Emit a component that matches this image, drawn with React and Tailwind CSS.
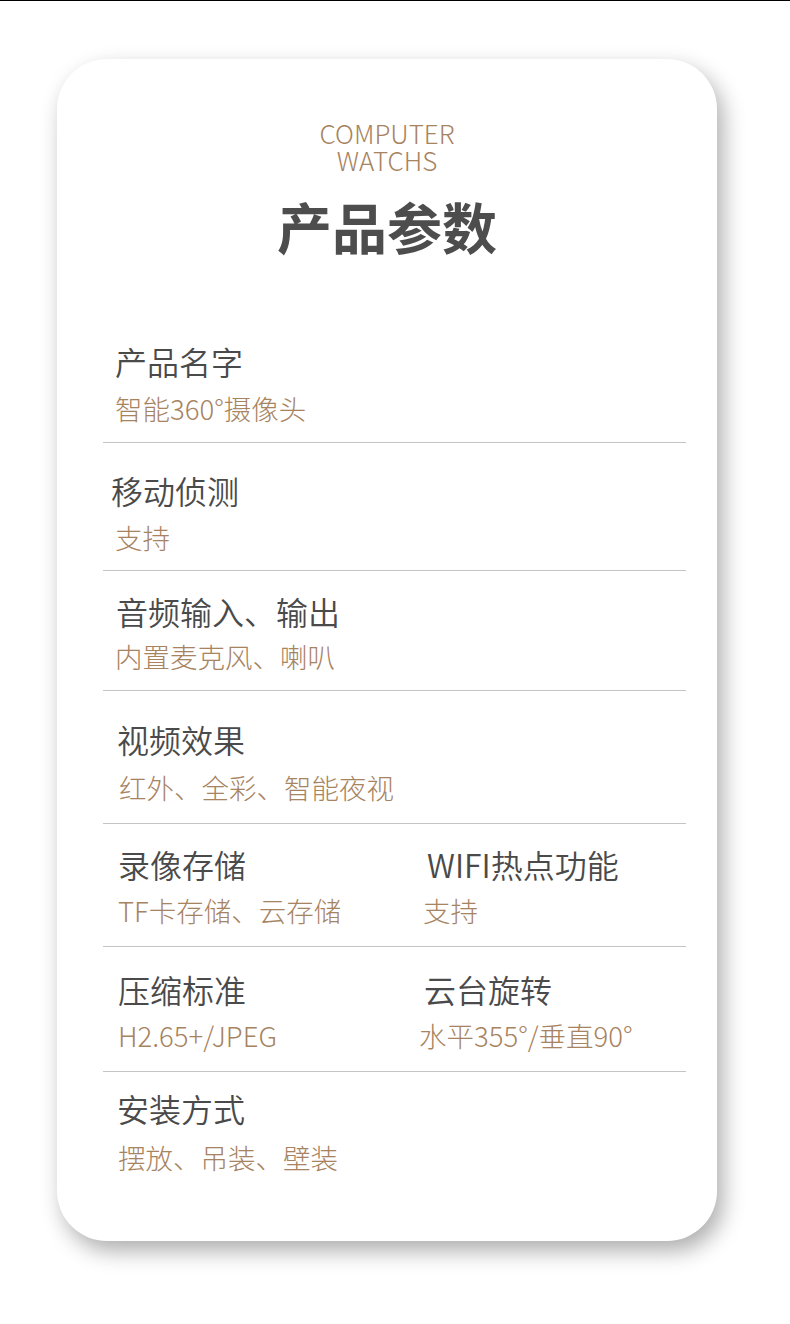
const specs = [
  { label: "产品名字", value: "智能360°摄像头", pt: "pt-[92px]", gap: "mt-[18px]", pb: "pb-[19px]", lp: "pl-[12px]", vp: "pl-[12px]" },
  { label: "移动侦测", value: "支持", pt: "pt-[31px]", gap: "mt-[18px]", pb: "pb-[19px]", lp: "pl-[8px]", vp: "pl-[12px]" },
  { label: "音频输入、输出", value: "内置麦克风、喇叭", pt: "pt-[24px]", gap: "mt-[16px]", pb: "pb-[19px]", lp: "pl-[13px]", vp: "pl-[12px]" },
  { label: "视频效果", value: "红外、全彩、智能夜视", pt: "pt-[32px]", gap: "mt-[19px]", pb: "pb-[22px]", lp: "pl-[14px]", vp: "pl-[16px]" },
  {
    label: "录像存储", value: "TF卡存储、云存储", label2: "WIFI热点功能", value2: "支持",
    pt: "pt-[24px]", gap: "mt-[17px]", pb: "pb-[21px]", lp: "pl-[15px]", vp: "pl-[15px]", lp2: "pl-[324px]", vp2: "pl-[320px]",
  },
  {
    label: "压缩标准", value: "H2.65+/JPEG", label2: "云台旋转", value2: "水平355°/垂直90°",
    pt: "pt-[26px]", gap: "mt-[17px]", pb: "pb-[22px]", lp: "pl-[15px]", vp: "pl-[15px]", lp2: "pl-[321px]", vp2: "pl-[316px]",
  },
  { label: "安装方式", value: "摆放、吊装、壁装", pt: "pt-[20px]", gap: "mt-[20px]", pb: "pb-0", lp: "pl-[14px]", vp: "pl-[15px]", last: true },
];

function Label({ text, pad }) {
  return <p className={`${pad} text-[32px] leading-none font-[350] text-[#4a4a4a] whitespace-nowrap`}>{text}</p>;
}

function Value({ text, pad }) {
  return <p className={`${pad} text-[27.5px] leading-none font-light text-[#a7835f] whitespace-nowrap`}>{text}</p>;
}

function SpecRow({ spec }) {
  const border = spec.last ? "" : "border-b border-[#c4c4c4]";
  if (spec.label2) {
    return (
      <div className={`${spec.pt} ${spec.pb} ${border} flex`}>
        <div className="w-[300px] shrink-0">
          <Label text={spec.label} pad={spec.lp} />
          <div className={spec.gap}>
            <Value text={spec.value} pad={spec.vp} />
          </div>
        </div>
        <div className="-ml-[300px]">
          <Label text={spec.label2} pad={spec.lp2} />
          <div className={spec.gap}>
            <Value text={spec.value2} pad={spec.vp2} />
          </div>
        </div>
      </div>
    );
  }
  return (
    <div className={`${spec.pt} ${spec.pb} ${border}`}>
      <Label text={spec.label} pad={spec.lp} />
      <div className={spec.gap}>
        <Value text={spec.value} pad={spec.vp} />
      </div>
    </div>
  );
}

export default function App() {
  return (
    <div className="w-[790px] h-[1324px] bg-white overflow-hidden" style={{ fontFamily: '"Noto Sans CJK SC", "Noto Sans", sans-serif' }}>
      <div className="h-px bg-black" />
      <div className="pt-[58px]">
        <div className="ml-[57px] w-[660px] h-[1182px] bg-white rounded-[50px] shadow-[6px_10px_22px_rgba(0,0,0,0.32)]">
          <p className="pt-[60px] text-center text-[26px] leading-[27px] font-light text-[#a7835f]">
            COMPUTER
            <br />
            WATCHS
          </p>
          <h1 className="mt-[25px] text-center text-[55px] leading-none font-bold text-[#4d4d4d]">产品参数</h1>
          <div className="ml-[46px] w-[583px]">
            {specs.map((s) => (
              <SpecRow key={s.label} spec={s} />
            ))}
          </div>
        </div>
      </div>
    </div>
  );
}
